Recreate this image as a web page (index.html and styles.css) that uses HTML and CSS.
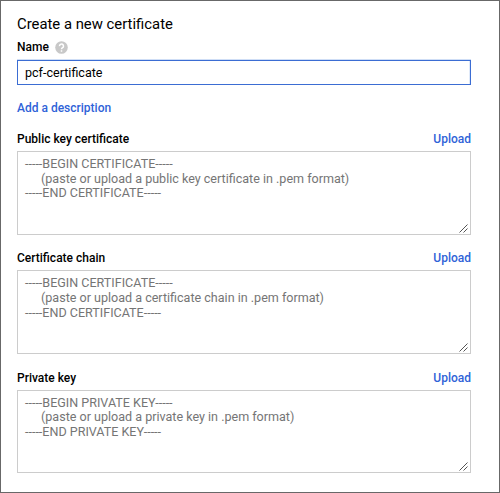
FILE: index.html
```html
<!DOCTYPE html>
<html lang="en"><head><meta charset="utf-8"><title>Create a new certificate</title><link rel="stylesheet" href="styles.css"></head>
<body><form class="panel">
<h1 class="title">Create a new certificate</h1>
<div class="label name-label">Name <svg class="help" viewBox="0 0 13 13"><circle cx="6.5" cy="6.5" r="6.3"/><path d="M4.5 5.1a2 2 0 1 1 3.1 1.6Q6.5 7.4 6.5 8.3M6.5 9.2v1.5"/></svg></div>
<div class="name-input">pcf-certificate</div>
<a class="link describe">Add a description</a>
<section class="field"><div class="head"><span class="label">Public key certificate</span><a class="link">Upload</a></div>
<div class="area">-----BEGIN CERTIFICATE-----
<span class="hint">(paste or upload a public key certificate in .pem format)</span>
-----END CERTIFICATE-----<svg class="grip" viewBox="0 0 9 9"><path d="M0.5 8.5l8-8M4.5 8.5l4-4"/></svg></div></section>
<section class="field"><div class="head"><span class="label">Certificate chain</span><a class="link">Upload</a></div>
<div class="area">-----BEGIN CERTIFICATE-----
<span class="hint">(paste or upload a certificate chain in .pem format)</span>
-----END CERTIFICATE-----<svg class="grip" viewBox="0 0 9 9"><path d="M0.5 8.5l8-8M4.5 8.5l4-4"/></svg></div></section>
<section class="field"><div class="head"><span class="label">Private key</span><a class="link">Upload</a></div>
<div class="area">-----BEGIN PRIVATE KEY-----
<span class="hint">(paste or upload a private key in .pem format)</span>
-----END PRIVATE KEY-----<svg class="grip" viewBox="0 0 9 9"><path d="M0.5 8.5l8-8M4.5 8.5l4-4"/></svg></div></section>
</form></body></html>
```
FILE: styles.css
```css
* { box-sizing: border-box; }
body { margin: 0; font-family: Roboto, sans-serif; font-size: 12px; color: #000; }
.panel { width: 500px; height: 493px; border: 1px solid #686868; padding: 14px 28px 0 16px; background: #fff; overflow: hidden; }
.title { margin: 0; font-size: 14.85px; line-height: 18px; font-weight: 400; }
.label { font-weight: 500; line-height: 16px; }
.name-label { display: flex; align-items: center; gap: 6px; margin-top: 6px; }
.help { width: 13px; height: 13px; fill: #c8c8c8; }
.help path { fill: none; stroke: #fff; stroke-width: 1.5; }
.name-input { margin-top: 5px; height: 25px; border: 1px solid #3b6dd3; box-shadow: 0 -1px #cfdef6, inset -1px 0 #dfe9f9; padding: 0 7px; font-size: 12.55px; line-height: 23px; }
.link { color: #2f63d8; font-weight: 500; line-height: 16px; }
.describe { display: block; margin-top: 15px; }
.field { margin-top: 15px; height: 104.3px; }
.head { display: flex; justify-content: space-between; }
.area { position: relative; margin-top: 4px; height: 83.5px; border: 1px solid #ccc; padding: 5px 7px; font-size: 12.55px; line-height: 14.7px; color: #757575; white-space: pre-line; }
.hint { padding-left: 16px; }
.grip { position: absolute; right: 2px; bottom: 1px; width: 9px; height: 9px; fill: none; stroke: #555; }
```
